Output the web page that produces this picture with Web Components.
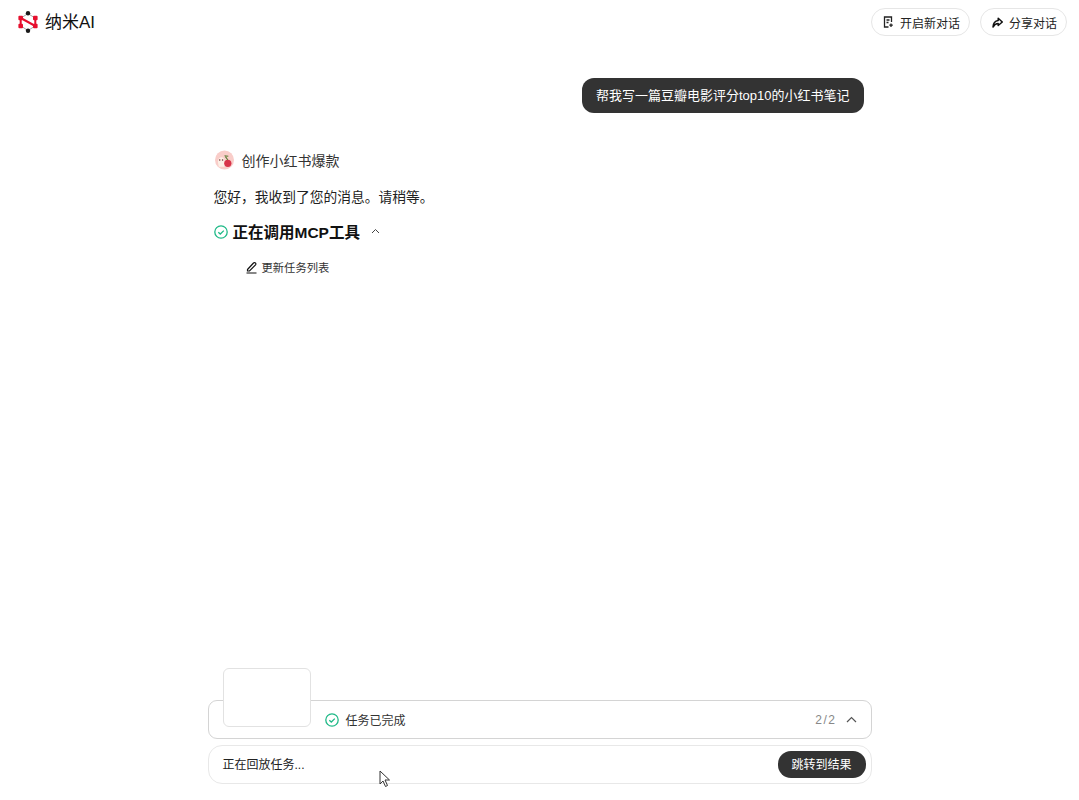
<!DOCTYPE html>
<html lang="zh">
<head>
<meta charset="utf-8">
<title>纳米AI</title>
<style>
  html, body { margin: 0; height: 100%; background: #fff; }
  body { font-family: "Liberation Sans", "Noto Sans CJK SC", sans-serif; color: #222; }
</style>
</head>
<body>
<nano-app></nano-app>
<script>
const FONT = `"Liberation Sans", "Noto Sans CJK SC", sans-serif`;

class NanoLogo extends HTMLElement {
  connectedCallback() {
    this.attachShadow({ mode: 'open' });
    this.shadowRoot.innerHTML = `
      <style>
        :host { display: flex; align-items: center; gap: 6px; }
        span { font-size: 17px; line-height: 24px; color: #111; padding-top: 2px; }
        svg { display: block; }
      </style>
      <svg width="22" height="24" viewBox="0 0 22 24">
        <path d="M4 8 11 3.600 18 8M4 16 11 20.600 18 16" fill="none" stroke="#666" stroke-width=".6"/>
        <path d="M3.700 8v8M18.300 8v8M3.700 8 18.300 16" fill="none" stroke="#e60f2d" stroke-width="2"/>
        <circle cx="11" cy="3.200" r="2.200" fill="#1a1a1a"/>
        <circle cx="11" cy="20.800" r="2.200" fill="#1a1a1a"/>
        <rect x="1.400" y="5.700" width="4.600" height="4.600" rx="1" fill="#e60f2d"/>
        <rect x="16" y="5.700" width="4.600" height="4.600" rx="1" fill="#e60f2d"/>
        <rect x="1.400" y="13.700" width="4.600" height="4.600" rx="1" fill="#e60f2d"/>
        <rect x="16" y="13.700" width="4.600" height="4.600" rx="1" fill="#e60f2d"/>
      </svg>
      <span>纳米AI</span>
    `;
  }
}

class PillButton extends HTMLElement {
  connectedCallback() {
    this.attachShadow({ mode: 'open' });
    this.shadowRoot.innerHTML = `
      <style>
        :host { display: inline-flex; align-items: center; gap: 6px; height: 26px; padding: 0 9px 0 11px; border: 1px solid #e6e6e6; border-radius: 14px; font-size: 12px; color: #222; background: #fff; }
      </style>
      <slot name="icon"></slot><slot></slot>
    `;
  }
}

class TopBar extends HTMLElement {
  connectedCallback() {
    this.attachShadow({ mode: 'open' });
    this.shadowRoot.innerHTML = `
      <style>
        :host { display: flex; align-items: center; justify-content: space-between; height: 44px; padding: 0 12px 0 17px; }
        .actions { display: flex; gap: 10px; }
      </style>
      <nano-logo></nano-logo>
      <div class="actions">
        <pill-button>
          <svg slot="icon" width="11" height="12" viewBox="0 0 11 12" fill="none" stroke="#222" stroke-width="1.300"><path d="M8.500 6V1H1.500v10h4M3.500 4h3M3.500 6.500h2M8 7.500v3.500M6.300 9.200h3.500"/></svg>
          开启新对话
        </pill-button>
        <pill-button>
          <svg slot="icon" width="11" height="11" viewBox="0 0 11 11"><path d="M6.200 1.200 10.300 5 6.200 8.500V6.600C4 6.600 2.400 7.600 1 10 1.200 6.400 3 4 6.200 3.500Z" fill="none" stroke="#111" stroke-width="1.500" stroke-linejoin="round"/></svg>
          分享对话
        </pill-button>
      </div>
    `;
  }
}

class UserBubble extends HTMLElement {
  connectedCallback() {
    this.attachShadow({ mode: 'open' });
    this.shadowRoot.innerHTML = `
      <style>
        :host { display: block; width: max-content; margin-left: auto; padding: 8px 14px 7px 14px; background: #333; color: #fff; border-radius: 12px; font-size: 13px; line-height: 20px; }
      </style>
      <slot></slot>
    `;
  }
}

class AgentHead extends HTMLElement {
  connectedCallback() {
    this.attachShadow({ mode: 'open' });
    this.shadowRoot.innerHTML = `
      <style>
        :host { display: flex; align-items: center; gap: 8px; height: 22px; font-size: 14px; color: #333; padding-left: 7px; }
        svg { display: block; }
      </style>
      <svg width="19" height="20" viewBox="0 0 20 20">
        <circle cx="10" cy="10" r="10" fill="#f9cdc9"/>
        <path d="M3 12c0-3 2-5 4-5s3 2 3 4v6H4z" fill="#fcefe6"/>
        <circle cx="13.500" cy="13.500" r="3.800" fill="#d8344a"/>
        <path d="M11 6.500 13.500 10M10 5.500l4 .5" stroke="#5a7d35" stroke-width="1.200" fill="none"/>
        <circle cx="8" cy="10" r=".8" fill="#6a3030"/>
        <circle cx="5" cy="10" r=".8" fill="#6a3030"/>
      </svg>
      <slot></slot>
    `;
  }
}

class CheckIcon extends HTMLElement {
  connectedCallback() {
    this.attachShadow({ mode: 'open' });
    this.shadowRoot.innerHTML = `
      <style>:host { display: block; width: 14px; height: 14px; } svg { display: block; }</style>
      <svg width="14" height="14" viewBox="0 0 14 14" fill="none" stroke="#1fb987" stroke-width="1.300">
        <circle cx="7" cy="7" r="6.200"/>
        <path d="M4.300 7.200 6.300 9 9.800 5.600"/>
      </svg>
    `;
  }
}

class ToolSection extends HTMLElement {
  connectedCallback() {
    this.attachShadow({ mode: 'open' });
    this.shadowRoot.innerHTML = `
      <style>
        :host { display: block; }
        .head { display: flex; align-items: center; gap: 5px; height: 22px; font-size: 15.500px; font-weight: 700; color: #111; padding-left: 6px; }
        .head check-icon { margin-top: 2px; }
        .head svg { margin-left: 6px; }
        .item { display: flex; align-items: center; gap: 4px; margin: 15px 0 0 37px; height: 20px; font-size: 11.300px; color: #333; }
        svg { display: block; }
      </style>
      <div class="head">
        <check-icon></check-icon>
        <slot name="title"></slot>
        <svg width="9" height="6" viewBox="0 0 9 6" fill="none" stroke="#444" stroke-width="1"><path d="M1 5 4.500 1.500 8 5"/></svg>
      </div>
      <div class="item">
        <svg width="13" height="13" viewBox="0 0 13 13" fill="none" stroke="#111" stroke-width="1.200"><path d="M2.500 8.500 8.500 2a1.300 1.300 0 0 1 2 1.800L4.500 10H2.500zM1.500 12h10"/></svg>
        <slot name="item"></slot>
      </div>
    `;
  }
}

class TaskBar extends HTMLElement {
  connectedCallback() {
    this.attachShadow({ mode: 'open' });
    this.shadowRoot.innerHTML = `
      <style>
        :host { display: flex; align-items: center; box-sizing: border-box; height: 39px; padding: 0 14px 0 116px; border: 1px solid #d4d4d4; border-radius: 9px; font-size: 12px; color: #333; background: #fff; position: relative; }
        .label { display: flex; align-items: center; gap: 7px; }
        .count { margin-left: auto; display: flex; align-items: center; gap: 9px; color: #888; letter-spacing: 1.500px; }
        svg { display: block; }
        .thumb { position: absolute; left: 14px; top: -33px; width: 88px; height: 59px; box-sizing: border-box; border: 1px solid #e2e2e2; border-radius: 6px; background: #fff; }
      </style>
      <div class="thumb"></div>
      <div class="label"><check-icon></check-icon><slot></slot></div>
      <div class="count">
        <slot name="count"></slot>
        <svg width="11" height="7" viewBox="0 0 11 7" fill="none" stroke="#555" stroke-width="1.200"><path d="M1 6 5.500 1.500 10 6"/></svg>
      </div>
    `;
  }
}

class ReplayBar extends HTMLElement {
  connectedCallback() {
    this.attachShadow({ mode: 'open' });
    this.shadowRoot.innerHTML = `
      <style>
        :host { display: flex; align-items: center; justify-content: space-between; box-sizing: border-box; height: 39px; padding: 0 5px 0 14px; border: 1px solid #e8e8e8; border-radius: 14px; font-size: 12px; color: #222; background: #fff; position: relative; }
        .text { margin-top: -2px; }
        button { font: inherit; height: 27px; padding: 0 14px 2px 13px; border: 0; border-radius: 13px; background: #333; color: #fff; }
        svg { position: absolute; left: 170px; top: 24px; }
      </style>
      <span class="text"><slot></slot></span>
      <button>跳转到结果</button>
      <svg width="12" height="18" viewBox="0 0 12 18"><path d="M1 1v13l3-3 2.500 5.500 2-1L6 10h4.500z" fill="#fff" stroke="#333" stroke-width="1"/></svg>
    `;
  }
}

class NanoApp extends HTMLElement {
  connectedCallback() {
    this.attachShadow({ mode: 'open' });
    this.shadowRoot.innerHTML = `
      <style>
        :host { display: flex; flex-direction: column; height: 800px; font-family: ${FONT}; color: #222; overflow: hidden; }
        main { flex: 1; width: 664px; margin: 0 auto; box-sizing: border-box; padding: 34px 8px 0 0; }
        p { margin: 16px 0 0 6px; height: 22px; line-height: 22px; font-size: 13.750px; color: #222; }
        agent-head { margin-top: 36px; }
        tool-section { margin-top: 11px; }
        footer { width: 664px; margin: 0 auto; display: flex; flex-direction: column; gap: 6px; padding-bottom: 16px; }
      </style>
      <top-bar></top-bar>
      <main>
        <user-bubble>帮我写一篇豆瓣电影评分top10的小红书笔记</user-bubble>
        <agent-head>创作小红书爆款</agent-head>
        <p>您好，我收到了您的消息。请稍等。</p>
        <tool-section>
          <span slot="title">正在调用MCP工具</span>
          <span slot="item">更新任务列表</span>
        </tool-section>
      </main>
      <footer>
        <task-bar>任务已完成<span slot="count">2/2</span></task-bar>
        <replay-bar>正在回放任务...</replay-bar>
      </footer>
    `;
  }
}

customElements.define('check-icon', CheckIcon);
customElements.define('nano-logo', NanoLogo);
customElements.define('pill-button', PillButton);
customElements.define('top-bar', TopBar);
customElements.define('user-bubble', UserBubble);
customElements.define('agent-head', AgentHead);
customElements.define('tool-section', ToolSection);
customElements.define('task-bar', TaskBar);
customElements.define('replay-bar', ReplayBar);
customElements.define('nano-app', NanoApp);
</script>
</body>
</html>
